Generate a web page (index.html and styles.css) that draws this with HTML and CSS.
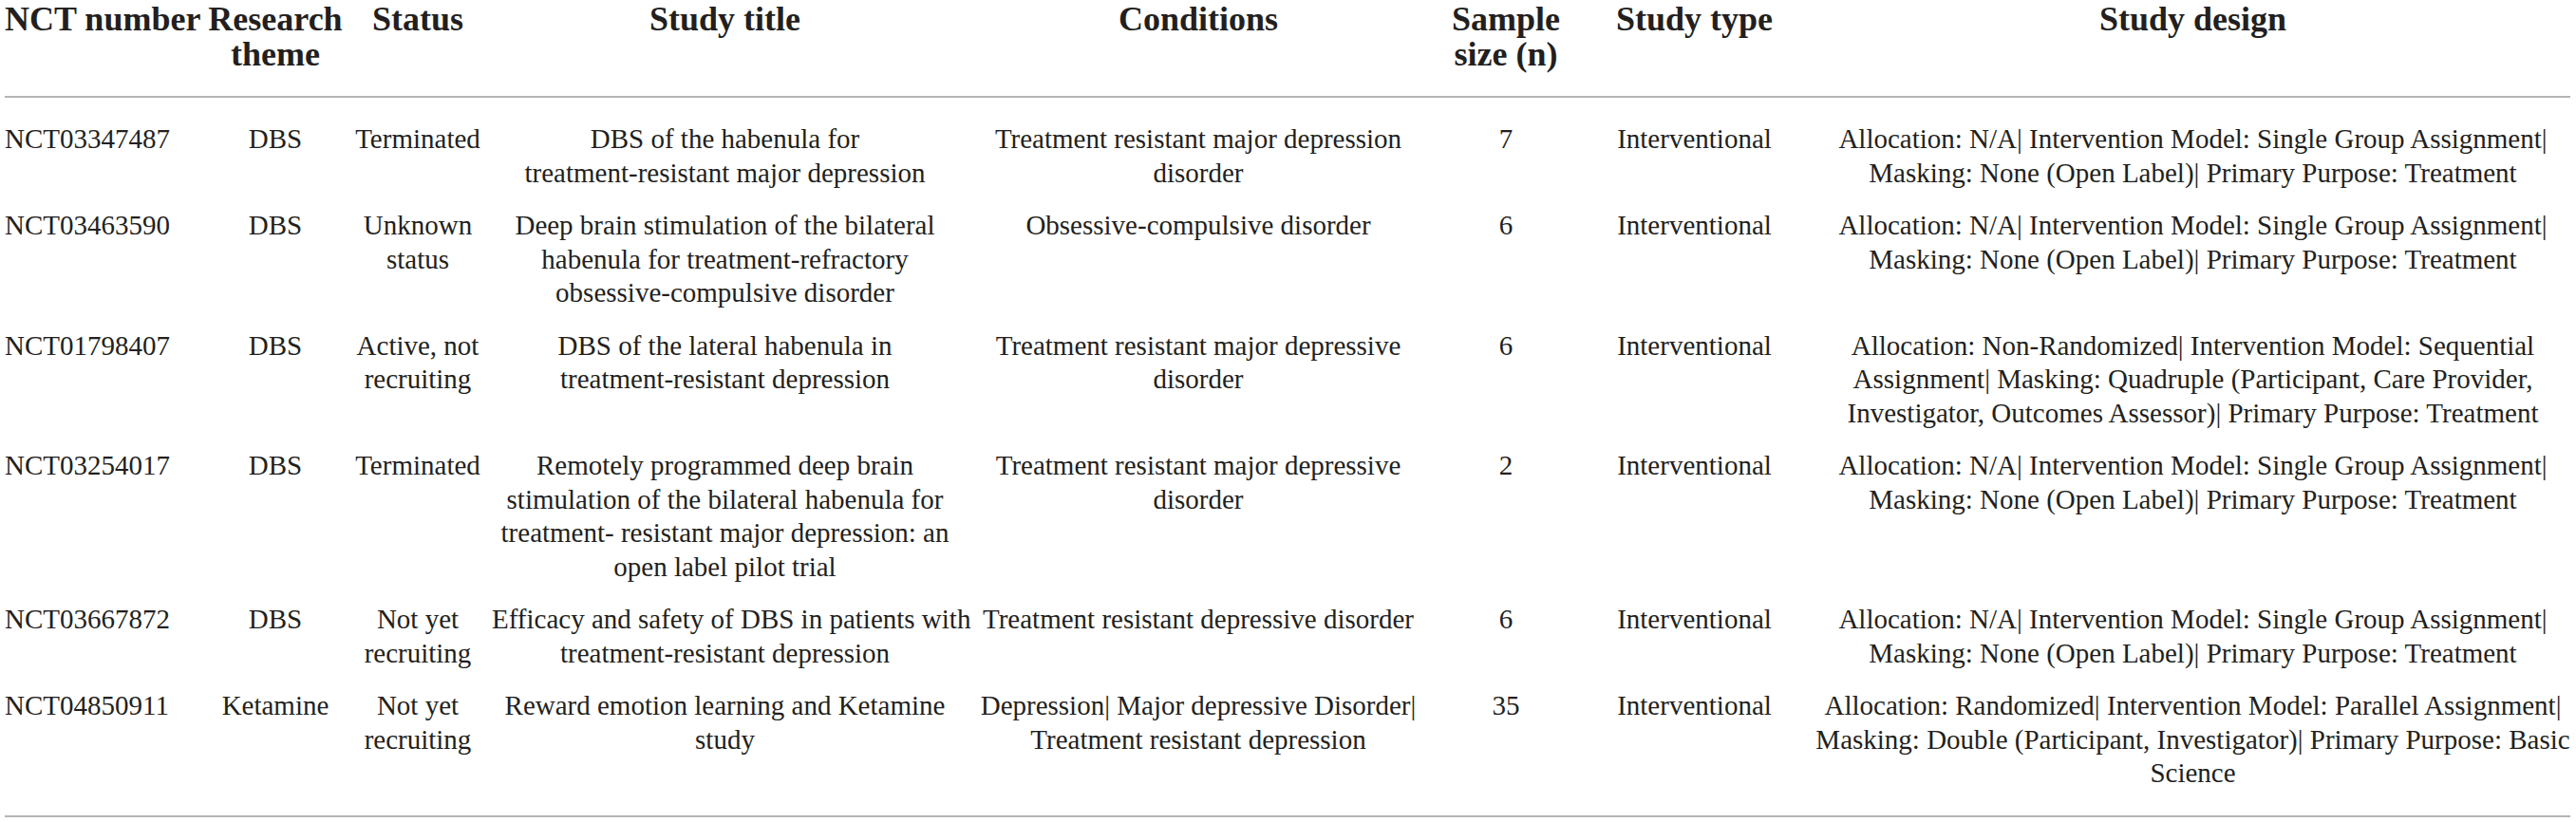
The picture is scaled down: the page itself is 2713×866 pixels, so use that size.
FILE: index.html
```html
<html>
    <head>
        <link rel="stylesheet" href="styles.css">
    </head>
    <body>
        <table class="trials">
            <colgroup>
                <col class="c-nct">
                <col class="c-theme">
                <col class="c-status">
                <col class="c-title">
                <col class="c-cond">
                <col class="c-size">
                <col class="c-type">
                <col class="c-design">
            </colgroup>
            <thead>
                <tr>
                    <th class="left">NCT number</th>
                    <th>Research<br>theme</th>
                    <th>Status</th>
                    <th>Study title</th>
                    <th>Conditions</th>
                    <th>Sample<br>size (n)</th>
                    <th>Study type</th>
                    <th>Study design</th>
                </tr>
            </thead>
            <tbody>
                <tr>
                    <td class="left">NCT03347487</td>
                    <td>DBS</td>
                    <td>Terminated</td>
                    <td>DBS of the habenula for<br>treatment-resistant major depression</td>
                    <td>Treatment resistant major depression<br>disorder</td>
                    <td>7</td>
                    <td>Interventional</td>
                    <td>Allocation: N/A| Intervention Model: Single Group Assignment|<br>Masking: None (Open Label)| Primary Purpose: Treatment</td>
                </tr>
                <tr>
                    <td class="left">NCT03463590</td>
                    <td>DBS</td>
                    <td>Unknown<br>status</td>
                    <td>Deep brain stimulation of the bilateral<br>habenula for treatment-refractory<br>obsessive-compulsive disorder</td>
                    <td>Obsessive-compulsive disorder</td>
                    <td>6</td>
                    <td>Interventional</td>
                    <td>Allocation: N/A| Intervention Model: Single Group Assignment|<br>Masking: None (Open Label)| Primary Purpose: Treatment</td>
                </tr>
                <tr>
                    <td class="left">NCT01798407</td>
                    <td>DBS</td>
                    <td>Active, not<br>recruiting</td>
                    <td>DBS of the lateral habenula in<br>treatment-resistant depression</td>
                    <td>Treatment resistant major depressive<br>disorder</td>
                    <td>6</td>
                    <td>Interventional</td>
                    <td>Allocation: Non-Randomized| Intervention Model: Sequential<br>Assignment| Masking: Quadruple (Participant, Care Provider,<br>Investigator, Outcomes Assessor)| Primary Purpose: Treatment</td>
                </tr>
                <tr>
                    <td class="left">NCT03254017</td>
                    <td>DBS</td>
                    <td>Terminated</td>
                    <td>Remotely programmed deep brain<br>stimulation of the bilateral habenula for<br>treatment- resistant major depression: an<br>open label pilot trial</td>
                    <td>Treatment resistant major depressive<br>disorder</td>
                    <td>2</td>
                    <td>Interventional</td>
                    <td>Allocation: N/A| Intervention Model: Single Group Assignment|<br>Masking: None (Open Label)| Primary Purpose: Treatment</td>
                </tr>
                <tr>
                    <td class="left">NCT03667872</td>
                    <td>DBS</td>
                    <td>Not yet<br>recruiting</td>
                    <td>Efficacy and safety of DBS in patients with<br>treatment-resistant depression</td>
                    <td>Treatment resistant depressive disorder</td>
                    <td>6</td>
                    <td>Interventional</td>
                    <td>Allocation: N/A| Intervention Model: Single Group Assignment|<br>Masking: None (Open Label)| Primary Purpose: Treatment</td>
                </tr>
                <tr>
                    <td class="left">NCT04850911</td>
                    <td>Ketamine</td>
                    <td>Not yet<br>recruiting</td>
                    <td>Reward emotion learning and Ketamine<br>study</td>
                    <td>Depression| Major depressive Disorder|<br>Treatment resistant depression</td>
                    <td>35</td>
                    <td>Interventional</td>
                    <td>Allocation: Randomized| Intervention Model: Parallel Assignment|<br>Masking: Double (Participant, Investigator)| Primary Purpose: Basic<br>Science</td>
                </tr>
            </tbody>
        </table>
    </body>
</html>
```

FILE: styles.css
```css
body{
    margin: 0;
    padding: 0;
    background: #fff;
    color: #231f20;
    font-family: "Liberation Serif", "Times New Roman", serif;
}

.trials{
    margin-left: 5px;
    width: 2702px;
    table-layout: fixed;
    border-collapse: collapse;
    border-bottom: 2px solid #b4b4b4;
}

.c-nct{ width: 213px; }
.c-theme{ width: 144px; }
.c-status{ width: 156px; }
.c-title{ width: 491px; }
.c-cond{ width: 506px; }
.c-size{ width: 142px; }
.c-type{ width: 255px; }
.c-design{ width: 795px; }

.trials th{
    font-size: 36px;
    line-height: 36.5px;
    font-weight: bold;
    text-align: center;
    vertical-align: top;
    padding: 2px 0 26px 0;
    border-bottom: 2px solid #b4b4b4;
    white-space: nowrap;
}

.trials td{
    font-size: 29px;
    line-height: 35.5px;
    text-align: center;
    vertical-align: top;
    padding: 10px 0;
    white-space: nowrap;
}

.trials tbody tr:first-child td{
    padding-top: 26px;
}
.trials tbody tr:last-child td{
    padding-bottom: 26px;
}

.trials .left{
    text-align: left;
}
```
